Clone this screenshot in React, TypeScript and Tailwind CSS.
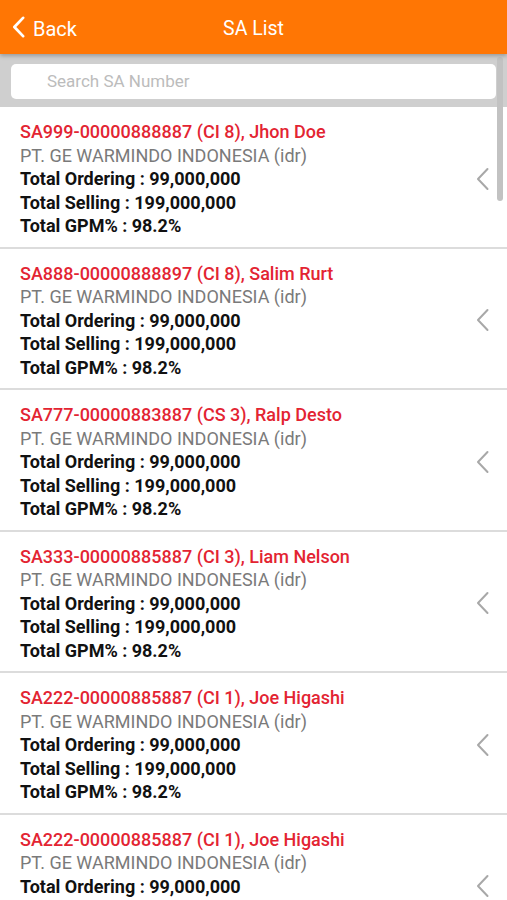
import React from 'react';

type SaItem = {
	code: string;
	company: string;
	ordering: string;
	selling: string;
	gpm: string;
};

const items: SaItem[] = [
	{ code: 'SA999-00000888887 (CI 8), Jhon Doe', company: 'PT. GE WARMINDO INDONESIA (idr)', ordering: '99,000,000', selling: '199,000,000', gpm: '98.2%' },
	{ code: 'SA888-00000888897 (CI 8), Salim Rurt', company: 'PT. GE WARMINDO INDONESIA (idr)', ordering: '99,000,000', selling: '199,000,000', gpm: '98.2%' },
	{ code: 'SA777-00000883887 (CS 3), Ralp Desto', company: 'PT. GE WARMINDO INDONESIA (idr)', ordering: '99,000,000', selling: '199,000,000', gpm: '98.2%' },
	{ code: 'SA333-00000885887 (CI 3), Liam Nelson', company: 'PT. GE WARMINDO INDONESIA (idr)', ordering: '99,000,000', selling: '199,000,000', gpm: '98.2%' },
	{ code: 'SA222-00000885887 (CI 1), Joe Higashi', company: 'PT. GE WARMINDO INDONESIA (idr)', ordering: '99,000,000', selling: '199,000,000', gpm: '98.2%' },
	{ code: 'SA222-00000885887 (CI 1), Joe Higashi', company: 'PT. GE WARMINDO INDONESIA (idr)', ordering: '99,000,000', selling: '199,000,000', gpm: '98.2%' },
];

function Chevron({ className, color, width }: { className: string; color: string; width: number }) {
	return (
		<svg className={className} viewBox="0 0 14 24" fill="none">
			<path d="M12 2 L2.5 12 L12 22" stroke={color} strokeWidth={width} strokeLinecap="round" strokeLinejoin="round" />
		</svg>
	);
}

function SaRow({ item }: { item: SaItem }) {
	return (
		<div className="flex items-center border-b-2 border-[#dcdcdc] pl-5 pr-4 pt-[13px] pb-[9px]">
			<div className="flex-1 text-[18px] leading-[23.5px]">
				<p className="font-medium text-[#e32432]">{item.code}</p>
				<p className="text-[#7a7a7a]">{item.company}</p>
				<p className="font-bold text-[#111]">Total Ordering : {item.ordering}</p>
				<p className="font-bold text-[#111]">Total Selling : {item.selling}</p>
				<p className="font-bold text-[#111]">Total GPM% : {item.gpm}</p>
			</div>
			<Chevron className="mr-[1px] h-[24px] w-[15px]" color="#a8a8a8" width={2} />
		</div>
	);
}

export default function App() {
	return (
		<div className="relative h-[900px] w-[507px] overflow-hidden bg-white font-['Roboto',sans-serif]">
			<header className="relative z-10 flex h-[54px] items-center bg-[#ff7604] pt-[3px] shadow-[0_2px_4px_rgba(0,0,0,0.25)]">
				<div className="flex items-center gap-[7px] pl-[11px]">
					<Chevron className="-mt-[3px] h-[22px] w-[15px]" color="#ffffff" width={3} />
					<span className="text-[20px] text-white">Back</span>
				</div>
				<span className="absolute left-1/2 -translate-x-1/2 text-[19.5px] text-white">SA List</span>
			</header>

			<div className="bg-[#cfcfcf] px-[11px] pt-[10px] pb-[8px]">
				<div className="flex h-[35px] items-center rounded-[5px] bg-white pl-[36px] text-[17px] text-[#bcbcbc]">
					Search SA Number
				</div>
			</div>

			<div>
				{items.map((item, i) => (
					<SaRow key={i} item={item} />
				))}
			</div>

			<div className="absolute left-[497px] top-[57px] h-[144px] w-[6px] rounded-full bg-[#c2c2c2]" />
		</div>
	);
}
